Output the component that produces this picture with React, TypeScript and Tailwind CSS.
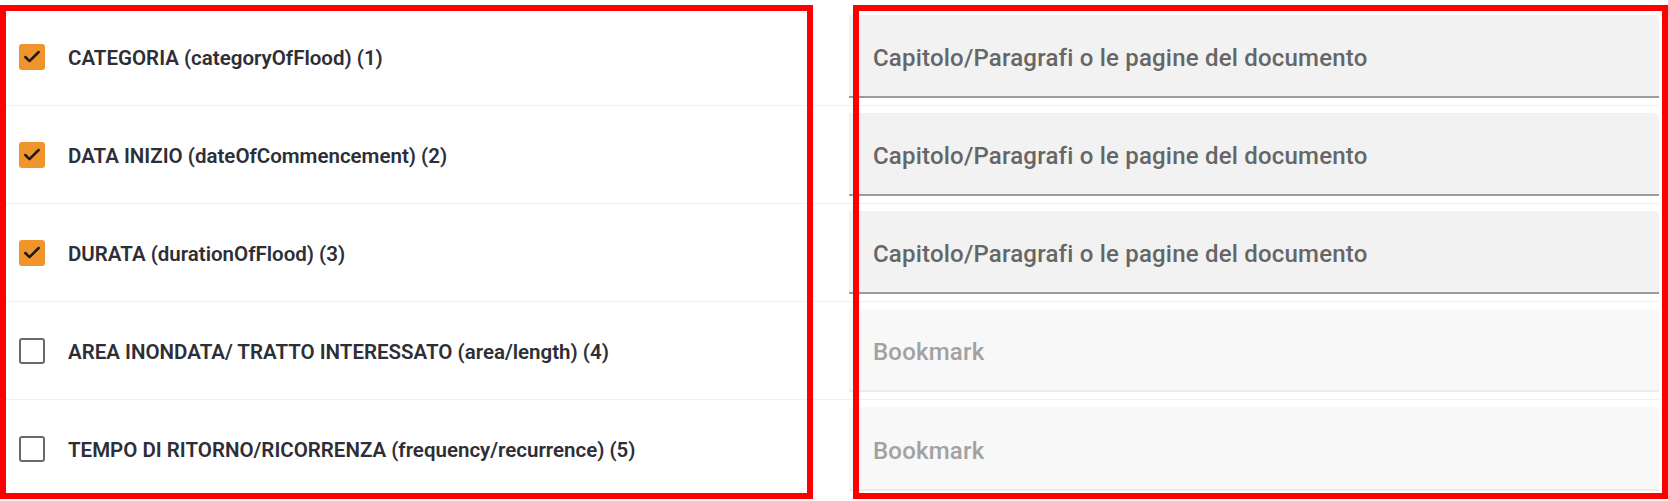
import { Check } from 'lucide-react';

type Row = {
  label: string;
  checked: boolean;
  placeholder: string;
};

const rows: Row[] = [
  { label: 'CATEGORIA (categoryOfFlood) (1)', checked: true, placeholder: 'Capitolo/Paragrafi o le pagine del documento' },
  { label: 'DATA INIZIO (dateOfCommencement) (2)', checked: true, placeholder: 'Capitolo/Paragrafi o le pagine del documento' },
  { label: 'DURATA (durationOfFlood) (3)', checked: true, placeholder: 'Capitolo/Paragrafi o le pagine del documento' },
  { label: 'AREA INONDATA/ TRATTO INTERESSATO (area/length) (4)', checked: false, placeholder: 'Bookmark' },
  { label: 'TEMPO DI RITORNO/RICORRENZA (frequency/recurrence) (5)', checked: false, placeholder: 'Bookmark' },
];

function Checkbox({ checked }: { checked: boolean }) {
  if (checked) {
    return (
      <div className="w-[26px] h-[26px] rounded-[3px] bg-[#f0952b] flex items-center justify-center shrink-0">
        <Check className="w-[20px] h-[20px] text-[#1a1a1a]" strokeWidth={3} />
      </div>
    );
  }
  return <div className="w-[26px] h-[26px] rounded-[3px] border-[2.5px] border-[#6a6a6a] bg-white shrink-0" />;
}

export default function App() {
  return (
    <div className="relative w-[1668px] h-[501px] bg-white overflow-hidden" style={{ fontFamily: 'Roboto, "Open Sans", sans-serif' }}>
      <div className="w-[1659px] pt-[8px]">
        {rows.map((r, i) => (
          <div
            key={i}
            className={`grid grid-cols-[849px_1fr] h-[98px] ${i < rows.length - 1 ? 'border-b border-[#f0f1f3]' : ''}`}
          >
            <div className="flex items-center gap-[23px] pl-[19px]">
              <Checkbox checked={r.checked} />
              <span className="text-[20.5px] font-semibold text-[#2e2e36] pt-[3px]">{r.label}</span>
            </div>
            <div className="py-[7px]">
              {r.checked ? (
                <div className="h-full bg-[#f2f2f2] border-b-2 border-[#9c9c9c] rounded-tr-[5px] flex items-center pl-[24px] pt-[5px]">
                  <span className="text-[24px] font-medium text-[#666666] tracking-[0.2px]">{r.placeholder}</span>
                </div>
              ) : (
                <div className="h-full bg-[#f8f8f8] border-b-2 border-[#ececec] rounded-tr-[5px] flex items-center pl-[24px] pt-[5px]">
                  <span className="text-[24px] font-medium text-[#a2a2a2] tracking-[0.2px]">{r.placeholder}</span>
                </div>
              )}
            </div>
          </div>
        ))}
      </div>
      <div className="absolute left-0 top-[5px] w-[813px] h-[494px] border-[6px] border-[#ff0000]" />
      <div className="absolute left-[853px] top-[5px] w-[815px] h-[494px] border-[6px] border-[#ff0000]" />
    </div>
  );
}
